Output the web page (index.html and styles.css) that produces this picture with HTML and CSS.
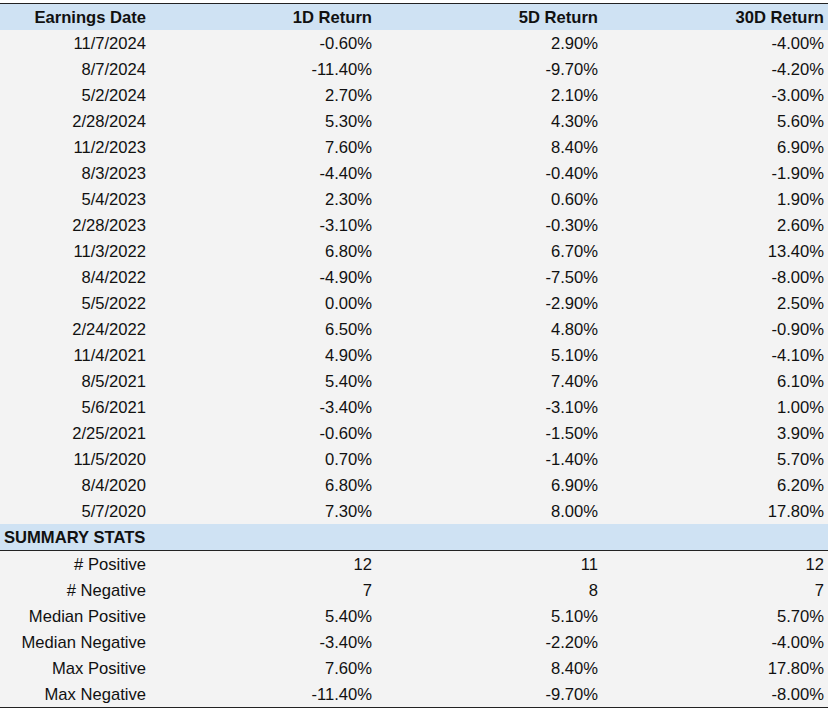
FILE: index.html
```html
<!DOCTYPE html>
<html>
<head>
<meta charset="utf-8">
<link rel="stylesheet" href="styles.css">
</head>
<body>
<table class="grid">
<colgroup><col class="c1"><col class="c2"><col class="c2"><col class="c2"></colgroup>
<thead>
<tr class="head"><th>Earnings Date</th><th>1D Return</th><th>5D Return</th><th>30D Return</th></tr>
</thead>
<tbody>
<tr><td>11/7/2024</td><td>-0.60%</td><td>2.90%</td><td>-4.00%</td></tr>
<tr><td>8/7/2024</td><td>-11.40%</td><td>-9.70%</td><td>-4.20%</td></tr>
<tr><td>5/2/2024</td><td>2.70%</td><td>2.10%</td><td>-3.00%</td></tr>
<tr><td>2/28/2024</td><td>5.30%</td><td>4.30%</td><td>5.60%</td></tr>
<tr><td>11/2/2023</td><td>7.60%</td><td>8.40%</td><td>6.90%</td></tr>
<tr><td>8/3/2023</td><td>-4.40%</td><td>-0.40%</td><td>-1.90%</td></tr>
<tr><td>5/4/2023</td><td>2.30%</td><td>0.60%</td><td>1.90%</td></tr>
<tr><td>2/28/2023</td><td>-3.10%</td><td>-0.30%</td><td>2.60%</td></tr>
<tr><td>11/3/2022</td><td>6.80%</td><td>6.70%</td><td>13.40%</td></tr>
<tr><td>8/4/2022</td><td>-4.90%</td><td>-7.50%</td><td>-8.00%</td></tr>
<tr><td>5/5/2022</td><td>0.00%</td><td>-2.90%</td><td>2.50%</td></tr>
<tr><td>2/24/2022</td><td>6.50%</td><td>4.80%</td><td>-0.90%</td></tr>
<tr><td>11/4/2021</td><td>4.90%</td><td>5.10%</td><td>-4.10%</td></tr>
<tr><td>8/5/2021</td><td>5.40%</td><td>7.40%</td><td>6.10%</td></tr>
<tr><td>5/6/2021</td><td>-3.40%</td><td>-3.10%</td><td>1.00%</td></tr>
<tr><td>2/25/2021</td><td>-0.60%</td><td>-1.50%</td><td>3.90%</td></tr>
<tr><td>11/5/2020</td><td>0.70%</td><td>-1.40%</td><td>5.70%</td></tr>
<tr><td>8/4/2020</td><td>6.80%</td><td>6.90%</td><td>6.20%</td></tr>
<tr><td>5/7/2020</td><td>7.30%</td><td>8.00%</td><td>17.80%</td></tr>
<tr class="section"><td class="label" colspan="4">SUMMARY STATS</td></tr>
<tr><td># Positive</td><td>12</td><td>11</td><td>12</td></tr>
<tr><td># Negative</td><td>7</td><td>8</td><td>7</td></tr>
<tr><td>Median Positive</td><td>5.40%</td><td>5.10%</td><td>5.70%</td></tr>
<tr><td>Median Negative</td><td>-3.40%</td><td>-2.20%</td><td>-4.00%</td></tr>
<tr><td>Max Positive</td><td>7.60%</td><td>8.40%</td><td>17.80%</td></tr>
<tr class="last"><td>Max Negative</td><td>-11.40%</td><td>-9.70%</td><td>-8.00%</td></tr>
</tbody>
</table>
</body>
</html>
```

FILE: styles.css
```css
html, body {
  margin: 0;
  padding: 0;
  background: #ffffff;
}
body {
  padding-top: 3px;
  font-family: "Liberation Sans", Arial, sans-serif;
  font-size: 16.6px;
  color: #111;
}
.grid {
  border-collapse: collapse;
  table-layout: fixed;
  width: 828px;
  background: #f3f3f3;
  border-top: 1px solid #222;
  border-bottom: 1px solid #222;
}
.c1 { width: 150px; }
.c2 { width: 226px; }
.grid th, .grid td {
  height: 26px;
  padding: 1px 4px 0 0;
  box-sizing: border-box;
  text-align: right;
  line-height: 25px;
  white-space: nowrap;
}
.grid th {
  background: #cfe2f3;
  font-weight: bold;
  color: #111;
}
.section td {
  background: #cfe2f3;
  border-bottom: 1px solid #222;
}
.section .label {
  text-align: left;
  padding-left: 4px;
  font-weight: bold;
}
```
